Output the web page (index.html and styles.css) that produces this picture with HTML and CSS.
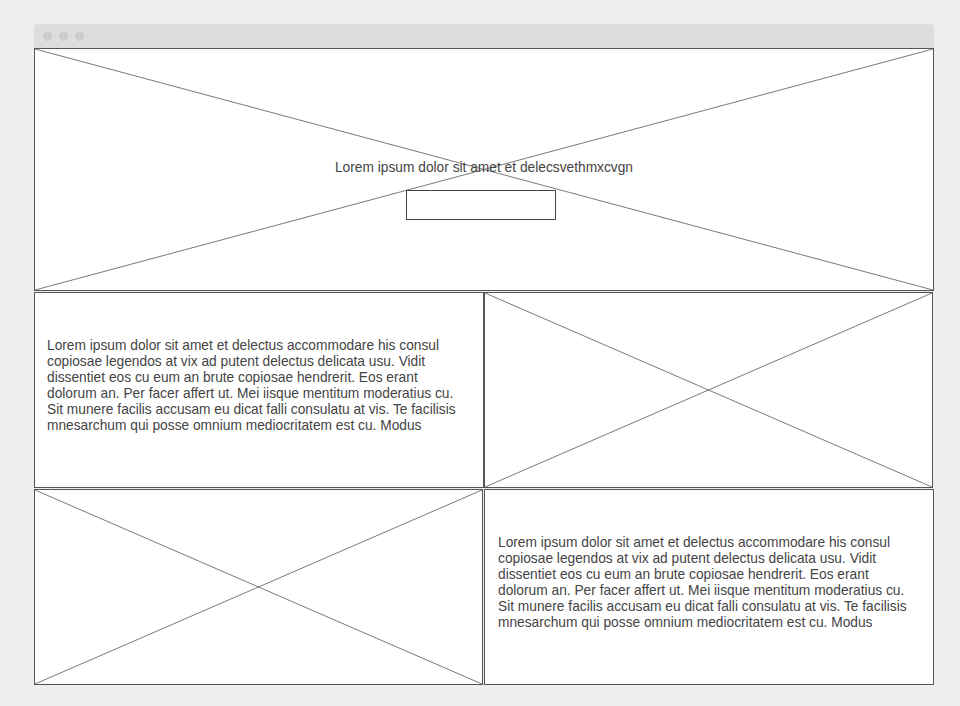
FILE: index.html
```html
<!DOCTYPE html>
<html>
<head>
<meta charset="utf-8">
<link rel="stylesheet" href="styles.css">
</head>
<body>
<div class="window">
  <div class="titlebar">
    <span class="dot"></span><span class="dot"></span><span class="dot"></span>
  </div>
  <div class="hero">
    <svg class="cross" viewBox="0 0 100 100" preserveAspectRatio="none"><line x1="0" y1="0" x2="100" y2="100"/><line x1="100" y1="0" x2="0" y2="100"/></svg>
    <div class="hero-content">
      <p class="hero-text">Lorem ipsum dolor sit amet et delecsvethmxcvgn</p>
      <div class="hero-button"></div>
    </div>
  </div>
  <div class="row">
    <div class="cell text-cell cell-a">
      <p>Lorem ipsum dolor sit amet et delectus accommodare his consul copiosae legendos at vix ad putent delectus delicata usu. Vidit dissentiet eos cu eum an brute copiosae hendrerit. Eos erant dolorum an. Per facer affert ut. Mei iisque mentitum moderatius cu. Sit munere facilis accusam eu dicat falli consulatu at vis. Te facilisis mnesarchum qui posse omnium mediocritatem est cu. Modus</p>
    </div>
    <div class="cell img-cell cell-b">
      <svg class="cross" viewBox="0 0 100 100" preserveAspectRatio="none"><line x1="0" y1="0" x2="100" y2="100"/><line x1="100" y1="0" x2="0" y2="100"/></svg>
    </div>
  </div>
  <div class="row row-2">
    <div class="cell img-cell cell-c">
      <svg class="cross" viewBox="0 0 100 100" preserveAspectRatio="none"><line x1="0" y1="0" x2="100" y2="100"/><line x1="100" y1="0" x2="0" y2="100"/></svg>
    </div>
    <div class="cell text-cell cell-d">
      <p>Lorem ipsum dolor sit amet et delectus accommodare his consul copiosae legendos at vix ad putent delectus delicata usu. Vidit dissentiet eos cu eum an brute copiosae hendrerit. Eos erant dolorum an. Per facer affert ut. Mei iisque mentitum moderatius cu. Sit munere facilis accusam eu dicat falli consulatu at vis. Te facilisis mnesarchum qui posse omnium mediocritatem est cu. Modus</p>
    </div>
  </div>
</div>
</body>
</html>
```

FILE: styles.css
```css
html, body {
  margin: 0;
  padding: 0;
  background: #eeeeee;
}

body {
  font-family: "Liberation Sans", Arial, sans-serif;
  color: #444444;
}

.window {
  width: 900px;
  margin: 24px 0 0 34px;
  display: flex;
  flex-direction: column;
}

.titlebar {
  height: 24px;
  background: #dddddd;
  border-radius: 4px 4px 0 0;
  display: flex;
  align-items: center;
  gap: 7px;
  padding-left: 9px;
}

.dot {
  width: 9px;
  height: 9px;
  border-radius: 50%;
  background: #cccccc;
}

.hero {
  position: relative;
  height: 243px;
  box-sizing: border-box;
  border: 1px solid #555555;
  background: #ffffff;
  display: flex;
  align-items: center;
  justify-content: center;
}

.cross {
  position: absolute;
  inset: 0;
  width: 100%;
  height: 100%;
}

.cross line {
  stroke: #7a7a7a;
  stroke-width: 1;
  vector-effect: non-scaling-stroke;
}

.hero-content {
  position: relative;
  display: flex;
  flex-direction: column;
  align-items: center;
  margin-top: 41px;
}

.hero-text {
  margin: 0;
  font-size: 13.75px;
  line-height: 16px;
}

.hero-button {
  margin-top: 14px;
  margin-right: 5px;
  width: 148px;
  height: 28px;
  border: 1px solid #444444;
  background: #ffffff;
}

.row {
  display: flex;
  margin-top: 1px;
}

.cell {
  position: relative;
  height: 196px;
  box-sizing: border-box;
  border: 1px solid #555555;
  background: #ffffff;
}

.cell-a { width: 450px; }
.cell-b { width: 449px; }
.cell-c { width: 449px; margin-right: 1px; }
.cell-d { width: 450px; }

.text-cell {
  display: flex;
  align-items: center;
  padding: 0 13px 8px 12px;
}

.cell-d.text-cell {
  padding-left: 13px;
}

.text-cell p {
  margin: 0;
  font-size: 13.75px;
  line-height: 16px;
}
```
